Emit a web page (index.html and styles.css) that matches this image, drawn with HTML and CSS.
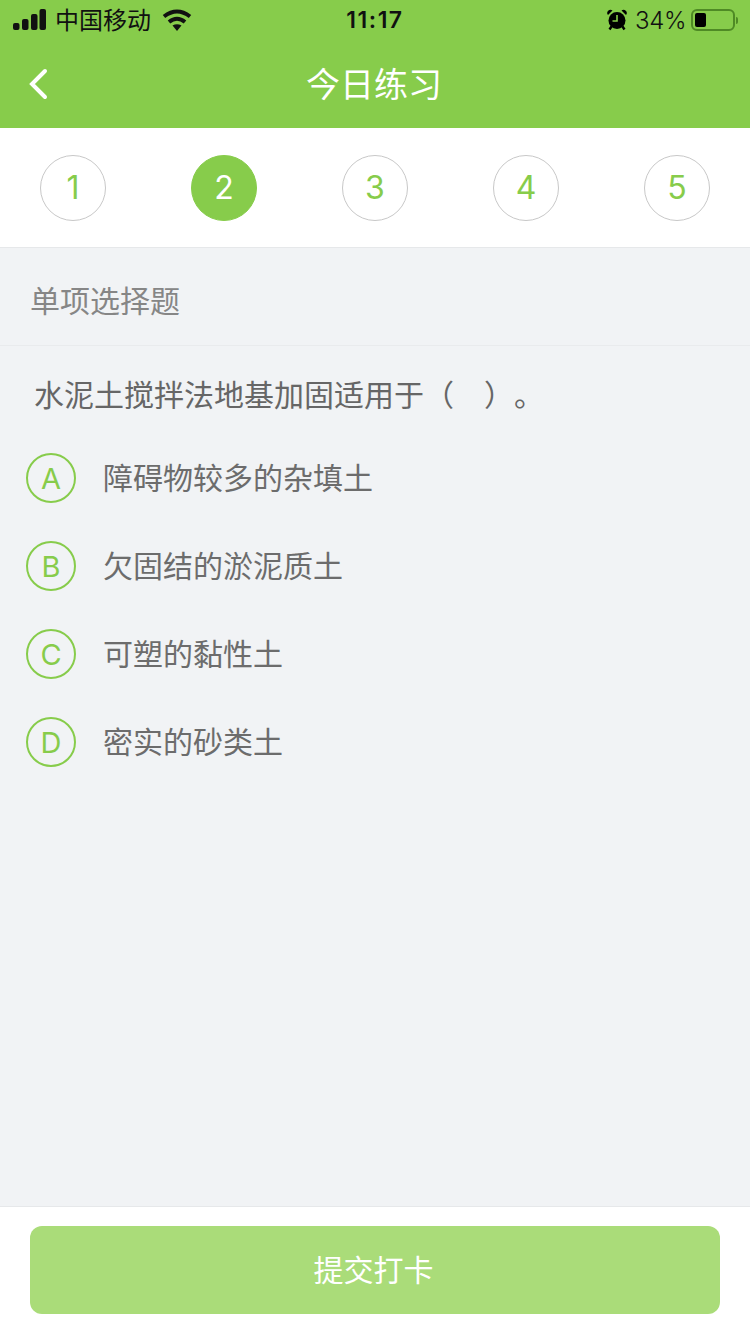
FILE: index.html
```html
<!DOCTYPE html>
<html lang="zh-CN">
<head>
    <meta charset="UTF-8">
    <title>今日练习</title>
    <link rel="stylesheet" href="styles.css">
</head>
<body>
    <div class="page">
        <div class="top-bar">
            <div class="status-bar">
                <div class="status-left">
                    <svg class="signal" width="34" height="22" viewBox="0 0 34 22">
                        <rect x="0" y="14" width="6.5" height="7" rx="2"/>
                        <rect x="9" y="10" width="6.5" height="11" rx="2"/>
                        <rect x="18" y="5" width="6.5" height="16" rx="2"/>
                        <rect x="26.5" y="0" width="6.5" height="21" rx="2"/>
                    </svg>
                    <span class="carrier">中国移动</span>
                    <svg class="wifi" width="30" height="22" viewBox="0 0 30 22">
                        <path d="M2 7.5Q15 -2.5 28 7.5" />
                        <path d="M7 13Q15 6.5 23 13" />
                        <path class="wifi-dot" d="M10.5 16.5Q15 14 19.5 16.5L15 22z" />
                    </svg>
                </div>
                <div class="status-time">11:17</div>
                <div class="status-right">
                    <svg class="alarm" width="22" height="22" viewBox="0 0 22 22">
                        <circle cx="11" cy="11.5" r="8.5" fill="#000"/>
                        <path d="M2 6 L6.5 1.5 A3.2 3.2 0 0 0 2 6z" fill="#000"/>
                        <path d="M20 6 L15.5 1.5 A3.2 3.2 0 0 1 20 6z" fill="#000"/>
                        <path d="M11 6v6H6.5" fill="none" stroke="#87cc4b" stroke-width="1.6"/>
                        <path d="M5.5 17.5l-2 3M16.5 17.5l2 3" stroke="#000" stroke-width="2.4"/>
                    </svg>
                    <span class="battery-text">34%</span>
                    <div class="battery">
                        <div class="battery-level"></div>
                    </div>
                    <div class="battery-tip"></div>
                </div>
            </div>
            <div class="nav-bar">
                <svg class="back" width="20" height="32" viewBox="0 0 20 32">
                    <path d="M16 3 L3 16 L16 29" />
                </svg>
                <h1>今日练习</h1>
            </div>
        </div>

        <div class="steps">
            <div class="step">1</div>
            <div class="step active">2</div>
            <div class="step">3</div>
            <div class="step">4</div>
            <div class="step">5</div>
        </div>

        <div class="question-type">单项选择题</div>

        <div class="question">
            <p class="question-title">水泥土搅拌法地基加固适用于（　）。</p>
            <div class="option"><div class="option-key">A</div><div class="option-text">障碍物较多的杂填土</div></div>
            <div class="option"><div class="option-key">B</div><div class="option-text">欠固结的淤泥质土</div></div>
            <div class="option"><div class="option-key">C</div><div class="option-text">可塑的黏性土</div></div>
            <div class="option"><div class="option-key">D</div><div class="option-text">密实的砂类土</div></div>
        </div>

        <div class="footer">
            <button class="submit">提交打卡</button>
        </div>
    </div>
</body>
</html>
```
FILE: styles.css
```css
* {
    box-sizing: border-box;
}
html, body {
    margin: 0;
    padding: 0;
}
body {
    font-family: "Liberation Sans", "Noto Sans CJK SC", sans-serif;
    background-color: #f1f3f5;
    color: #666;
}
.page {
    width: 750px;
    height: 1334px;
    display: flex;
    flex-direction: column;
    overflow: hidden;
}
.top-bar {
    height: 128px;
    background-color: #87cc4b;
    flex: none;
}
.status-bar {
    height: 40px;
    display: grid;
    grid-template-columns: 1fr auto 1fr;
    align-items: center;
    color: #111;
    font-size: 24px;
}
.status-left {
    display: flex;
    align-items: center;
    padding-left: 13px;
}
.signal {
    fill: #111;
    margin-right: 8px;
}
.carrier {
    padding-bottom: 4px;
}
.wifi {
    margin-left: 11px;
}
.wifi path {
    fill: none;
    stroke: #111;
    stroke-width: 4;
}
.wifi .wifi-dot {
    fill: #111;
    stroke: none;
}
.status-time {
    font-family: Inter, "Liberation Sans", sans-serif;
    font-weight: 600;
    font-size: 23px;
    letter-spacing: 1.5px;
}
.status-right {
    display: flex;
    align-items: center;
    justify-content: flex-end;
    padding-right: 12px;
}
.alarm {
    margin-right: 7px;
}
.battery-text {
    margin-right: 5px;
    font-family: Inter, "Liberation Sans", sans-serif;
    font-weight: 300;
    font-size: 24px;
    letter-spacing: -0.4px;
}
.battery {
    width: 44px;
    height: 22px;
    border: 2px solid #4f8a25;
    border-radius: 6px;
    padding: 2px;
}
.battery-level {
    width: 11px;
    height: 14px;
    background-color: #000;
    border-radius: 2px;
}
.battery-tip {
    width: 2px;
    height: 7px;
    margin-left: 1px;
    background-color: #4f8a25;
    border-radius: 0 2px 2px 0;
}
.nav-bar {
    height: 88px;
    position: relative;
    display: flex;
    align-items: center;
    justify-content: center;
}
.nav-bar h1 {
    margin: 0 2px 4px 0;
    font-size: 34px;
    font-weight: normal;
    color: #fff;
}
.back {
    position: absolute;
    left: 29px;
    top: 28px;
    fill: none;
    stroke: #fff;
    stroke-width: 4;
    stroke-linecap: round;
}
.steps {
    height: 120px;
    flex: none;
    background-color: #fff;
    border-bottom: 1px solid #e6e8ea;
    padding: 0 40px;
    display: flex;
    align-items: center;
    justify-content: space-between;
}
.step {
    width: 66px;
    height: 66px;
    border-radius: 50%;
    border: 1px solid #c8c8c8;
    color: #87cc4b;
    font-family: Inter, "Liberation Sans", sans-serif;
    font-weight: 400;
    font-size: 32px;
    display: flex;
    align-items: center;
    justify-content: center;
}
.step.active {
    background-color: #87cc4b;
    border-color: #87cc4b;
    color: #fff;
}
.question-type {
    height: 98px;
    flex: none;
    padding: 4px 0 0 30px;
    display: flex;
    align-items: center;
    font-size: 30px;
    color: #868686;
    border-bottom: 1px solid #e9ebed;
}
.question {
    flex: 1;
    padding: 0 26px;
}
.question-title {
    margin: 0;
    padding: 30px 0 0 8px;
    font-size: 30px;
    line-height: 40px;
    height: 88px;
    white-space: nowrap;
    text-spacing-trim: space-all;
}
.option {
    display: flex;
    align-items: center;
    height: 88px;
    font-size: 30px;
    color: #6c6c6c;
}
.option-text {
    padding-bottom: 4px;
}
.option-key {
    width: 50px;
    height: 50px;
    border-radius: 50%;
    border: 2px solid #87cc4b;
    color: #87cc4b;
    font-family: Inter, "Liberation Sans", sans-serif;
    font-weight: 400;
    font-size: 29px;
    display: flex;
    align-items: center;
    justify-content: center;
    margin-right: 27px;
}
.footer {
    height: 128px;
    flex: none;
    background-color: #fff;
    border-top: 1px solid #e6e8ea;
    padding: 19px 30px 0;
}
.submit {
    display: block;
    width: 100%;
    height: 88px;
    padding: 0 3px 4px 0;
    border: none;
    border-radius: 12px;
    background-color: #aadc79;
    color: #fff;
    font-family: inherit;
    font-size: 30px;
}
```
